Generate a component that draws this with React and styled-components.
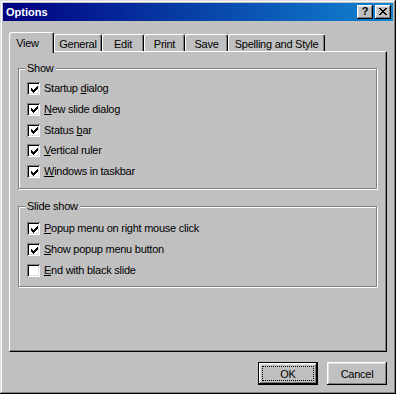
import React from 'react';
import styled, { createGlobalStyle } from 'styled-components';

const GlobalStyle = createGlobalStyle`
  html, body {
    margin: 0;
    padding: 0;
    background: #c0c0c0;
  }
  body {
    font-family: "Liberation Sans", Arial, sans-serif;
    font-size: 11px;
    letter-spacing: -0.25px;
    color: #000;
  }
`;

const bevel = `
  box-shadow: inset -1px -1px #000, inset 1px 1px #fff,
    inset -2px -2px #808080, inset 2px 2px #dfdfdf;
`;

const Window = styled.div`
  box-sizing: border-box;
  width: 396px;
  height: 394px;
  padding: 3px;
  background: #c0c0c0;
  box-shadow: inset -1px -1px #000, inset 1px 1px #dfdfdf,
    inset -2px -2px #808080, inset 2px 2px #fff;
  display: flex;
  flex-direction: column;
`;

const TitleBar = styled.div`
  height: 18px;
  display: flex;
  align-items: center;
  padding: 0 2px 0 3px;
  background: linear-gradient(to right, #000080, #1084d0);
`;

const Title = styled.div`
  flex: 1;
  color: #fff;
  font-weight: bold;
  font-size: 11px;
  letter-spacing: 0;
`;

const CaptionButtons = styled.div`
  display: flex;
  gap: 2px;
`;

const CaptionButton = styled.div`
  box-sizing: border-box;
  width: 16px;
  height: 14px;
  background: #c0c0c0;
  ${bevel}
  display: flex;
  align-items: center;
  justify-content: center;
  font-weight: bold;
  font-size: 11px;
  line-height: 1;
  letter-spacing: 0;
  padding-bottom: 1px;
`;

const Body = styled.div`
  flex: 1;
  display: flex;
  flex-direction: column;
  padding: 0 6px;
`;

const TabRow = styled.div`
  margin-top: 11px;
  height: 19px;
  display: flex;
  align-items: flex-end;
`;

const Tab = styled.div`
  box-sizing: border-box;
  width: ${p => p.$w}px;
  height: ${p => (p.$active ? 21 : 17)}px;
  margin-bottom: ${p => (p.$active ? -2 : 0)}px;
  position: relative;
  z-index: ${p => (p.$active ? 1 : 0)};
  background: #c0c0c0;
  border-top: 1px solid #fff;
  border-left: 1px solid #fff;
  border-right: 1px solid #000;
  border-radius: 3px 3px 0 0;
  box-shadow: inset -1px 0 #808080;
  display: flex;
  align-items: center;
  justify-content: center;
  padding: ${p => (p.$active ? '0 8px 1px 0' : '2px 0 0 0')};
`;

const Panel = styled.div`
  box-sizing: border-box;
  height: 301px;
  border-top: 1px solid #fff;
  border-left: 1px solid #fff;
  border-right: 1px solid #000;
  border-bottom: 1px solid #000;
  box-shadow: inset -1px -1px #808080;
  padding: 16px 9px 0 8px;
  display: flex;
  flex-direction: column;
`;

const Group = styled.div`
  box-sizing: border-box;
  position: relative;
  height: ${p => p.$h}px;
  margin-top: ${p => p.$mt || 0}px;
  border: 1px solid #808080;
  box-shadow: inset 1px 1px #fff, 1px 1px 0 #fff;
  padding: ${p => p.$pt}px 0 0 8px;
  display: flex;
  flex-direction: column;
  gap: ${p => p.$gap}px;
`;

const GroupLabel = styled.div`
  position: absolute;
  top: -7px;
  left: 6px;
  padding: 0 2px;
  line-height: 13px;
  background: #c0c0c0;
`;

const CheckRow = styled.label`
  display: flex;
  align-items: center;
  gap: 4px;
  height: 13px;
  line-height: 13px;
`;

const CheckBox = styled.span`
  box-sizing: border-box;
  width: 13px;
  height: 13px;
  flex: none;
  background: #fff;
  box-shadow: inset 1px 1px #808080, inset -1px -1px #fff,
    inset 2px 2px #000, inset -2px -2px #dfdfdf;
  display: flex;
  align-items: center;
  justify-content: center;
  padding: 1px 0 0 1px;
`;

const Footer = styled.div`
  margin-top: 10px;
  display: flex;
  justify-content: flex-end;
  gap: 9px;
`;

const Button = styled.button`
  box-sizing: border-box;
  position: relative;
  width: 60px;
  height: 23px;
  padding: 0;
  font: inherit;
  letter-spacing: inherit;
  color: #000;
  background: #c0c0c0;
  border: ${p => (p.$default ? '1px solid #000' : 'none')};
  ${bevel}

  &::after {
    content: '';
    display: ${p => (p.$default ? 'block' : 'none')};
    position: absolute;
    inset: 3px;
    border: 1px dotted #000;
  }
`;

const CheckMark = () => (
  <svg width="7" height="7" viewBox="0 0 7 7" shapeRendering="crispEdges">
    <path
      fill="#000"
      d="M6 0h1v1h-1z M5 1h2v1h-2z M0 2h1v1h-1z M4 2h3v1h-3z M0 3h2v1h-2z M3 3h3v1h-3z M0 4h5v1h-5z M1 5h3v1h-3z M2 6h1v1h-1z"
    />
  </svg>
);

const CloseGlyph = () => (
  <svg width="8" height="7" viewBox="0 0 8 7" shapeRendering="crispEdges">
    <path
      fill="#000"
      d="M0 0h2v1h-2z M6 0h2v1h-2z M1 1h2v1h-2z M5 1h2v1h-2z M2 2h4v1h-4z M3 3h2v1h-2z M2 4h4v1h-4z M1 5h2v1h-2z M5 5h2v1h-2z M0 6h2v1h-2z M6 6h2v1h-2z"
    />
  </svg>
);

const Option = ({ checked, pre = '', accel, post = '' }) => (
  <CheckRow>
    <CheckBox>{checked && <CheckMark />}</CheckBox>
    <span>
      {pre}
      <u>{accel}</u>
      {post}
    </span>
  </CheckRow>
);

const tabs = [
  { label: 'View', w: 45, active: true },
  { label: 'General', w: 48 },
  { label: 'Edit', w: 42 },
  { label: 'Print', w: 41 },
  { label: 'Save', w: 43 },
  { label: 'Spelling and Style', w: 97 },
];

export default function App() {
  return (
    <>
      <GlobalStyle />
      <Window>
        <TitleBar>
          <Title>Options</Title>
          <CaptionButtons>
            <CaptionButton>?</CaptionButton>
            <CaptionButton>
              <CloseGlyph />
            </CaptionButton>
          </CaptionButtons>
        </TitleBar>
        <Body>
          <TabRow>
            {tabs.map(t => (
              <Tab key={t.label} $w={t.w} $active={t.active}>
                {t.label}
              </Tab>
            ))}
          </TabRow>
          <Panel>
            <Group $h={121} $pt={13} $gap={7.75}>
              <GroupLabel>Show</GroupLabel>
              <Option checked pre="Startup " accel="d" post="ialog" />
              <Option checked accel="N" post="ew slide dialog" />
              <Option checked pre="Status " accel="b" post="ar" />
              <Option checked accel="V" post="ertical ruler" />
              <Option checked accel="W" post="indows in taskbar" />
            </Group>
            <Group $h={81} $mt={17} $pt={15} $gap={8}>
              <GroupLabel>Slide show</GroupLabel>
              <Option checked accel="P" post="opup menu on right mouse click" />
              <Option checked accel="S" post="how popup menu button" />
              <Option accel="E" post="nd with black slide" />
            </Group>
          </Panel>
          <Footer>
            <Button $default>OK</Button>
            <Button>Cancel</Button>
          </Footer>
        </Body>
      </Window>
    </>
  );
}
